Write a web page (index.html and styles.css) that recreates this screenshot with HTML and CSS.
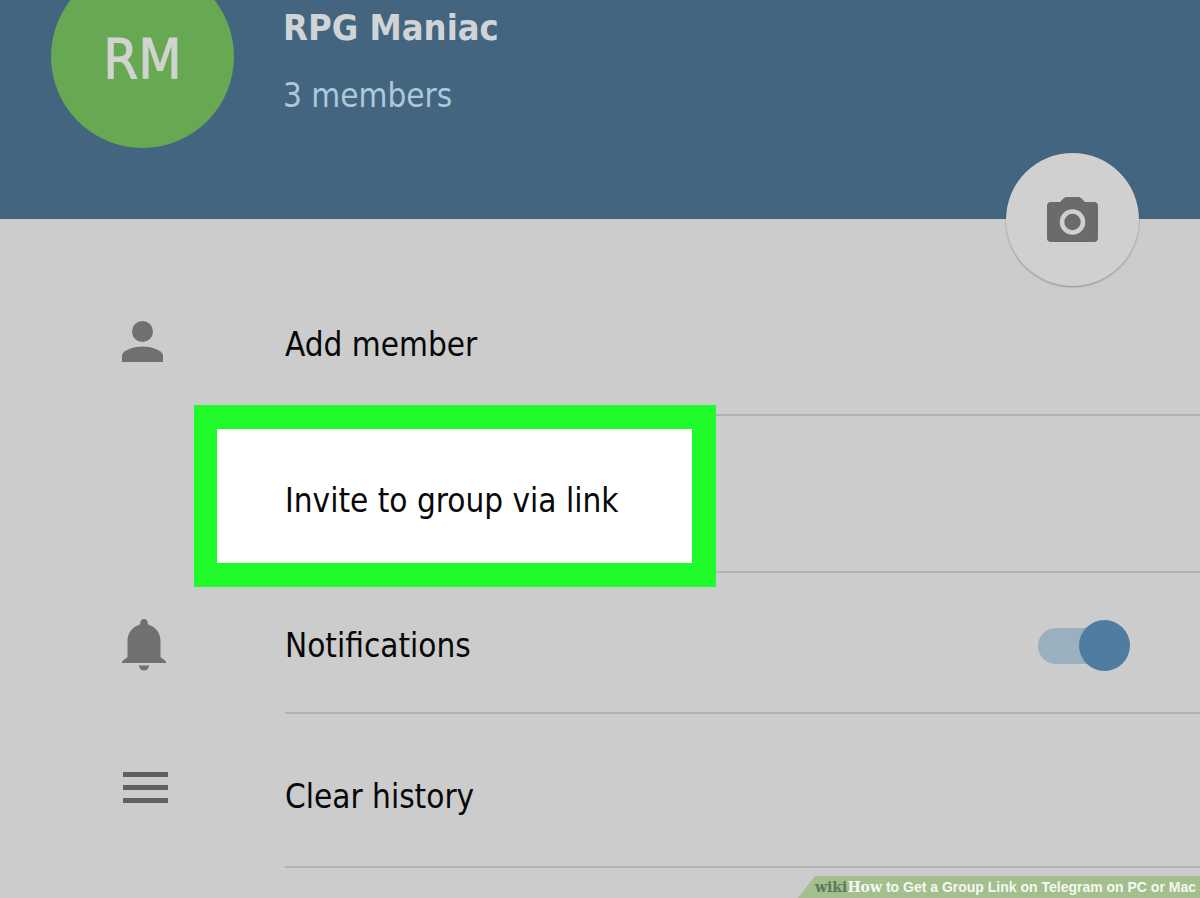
FILE: index.html
```html
<!DOCTYPE html>
<html lang="en">
<head>
<meta charset="utf-8">
<meta name="viewport" content="width=device-width, initial-scale=1">
<title>RPG Maniac</title>
<link rel="stylesheet" href="styles.css">
</head>
<body>
<div class="page">
  <header class="header">
    <div class="avatar">RM</div>
    <div class="info">
      <h1 class="title">RPG Maniac</h1>
      <p class="members">3 members</p>
    </div>
    <button class="camera" type="button" aria-label="Set group photo">
      <svg width="52" height="46" viewBox="0 0 52 46" aria-hidden="true">
        <path fill="#6b6b6b" d="M4 5H13L17 1Q18 0 20 0H31Q33 0 34 1L38 5H47Q51 5 51 9V41Q51 45 47 45H4Q0 45 0 41V9Q0 5 4 5Z"/>
        <circle cx="25.500" cy="25" r="10.500" fill="#6b6b6b" stroke="#d0d0d0" stroke-width="4.500"/>
      </svg>
    </button>
  </header>
  <main class="list">
    <div class="row row-add">
      <div class="icon">
        <svg width="42" height="42" viewBox="0 0 42 42" fill="#707070" aria-hidden="true">
          <circle cx="20.500" cy="10.500" r="10.500"/>
          <path d="M0 41V34C2 28.500 12 25.500 20.500 25.500S39 28.500 41 34V41Z"/>
        </svg>
      </div>
      <div class="body"><button class="action" type="button">Add member</button></div>
    </div>
    <div class="row row-invite">
      <div class="icon"></div>
      <div class="body"><span class="frame"></span><button class="action" type="button">Invite to group via link</button></div>
    </div>
    <div class="row row-notify">
      <div class="icon">
        <svg width="44" height="52" viewBox="0 0 44 52" fill="#707070" aria-hidden="true">
          <path d="M22 0C24.500 0 26 2 26 5.500C33.500 7.500 38.500 14 38.500 22V38L44 42.500V44H0V42.500L5.500 38V22C5.500 14 10.500 7.500 18 5.500C18 2 19.500 0 22 0Z"/>
          <path d="M16.500 46.500H27.500C26.500 49.500 24.500 51.500 22 51.500S17.500 49.500 16.500 46.500Z"/>
        </svg>
      </div>
      <div class="body">
        <label class="label" for="notify">Notifications</label>
        <input class="switch" id="notify" type="checkbox" role="switch" checked>
      </div>
    </div>
    <div class="row row-clear">
      <div class="icon">
        <svg width="46" height="32" viewBox="0 0 46 32" fill="#606060" aria-hidden="true">
          <path d="M1 0H46V5H1ZM1 13H46V18H1ZM1 26H46V31H1Z"/>
        </svg>
      </div>
      <div class="body"><button class="action" type="button">Clear history</button></div>
    </div>
  </main>
  <footer class="caption"><span class="wiki">wiki</span><span class="how">How</span> to Get a Group Link on Telegram on PC or Mac</footer>
</div>
</body>
</html>
```
FILE: styles.css
```css
* { box-sizing: border-box; }

body {
  margin: 0;
  background: #cccccc;
  color: #080808;
  font-family: "DejaVu Sans Condensed", "DejaVu Sans", sans-serif;
  font-size: 33px;
}

.page {
  min-height: 100vh;
  display: flex;
  flex-direction: column;
  overflow: hidden;
}

.header {
  position: relative;
  display: flex;
  align-items: flex-start;
  gap: 49px;
  padding: 0 60px 71px 51px;
  background: #436580;
}

.avatar {
  flex: none;
  width: 183px;
  height: 183px;
  margin-top: -35px;
  border-radius: 50%;
  background: #67a853;
  color: #d0d4d0;
  font-size: 56px;
  line-height: 187px;
  text-align: center;
  -webkit-text-stroke: 1px #d0d4d0;
}

.info { padding-top: 4px; }

.title {
  margin: 0;
  color: #d0d4d6;
  font-size: 36px;
  line-height: 48px;
}

.members {
  margin: 20px 0 0;
  color: #adc8db;
  line-height: 48px;
}

.camera {
  position: absolute;
  right: 61px;
  bottom: -67px;
  width: 133px;
  height: 133px;
  display: grid;
  place-items: center;
  padding: 0;
  border: 0;
  border-radius: 50%;
  background: #d0d0d0;
  box-shadow: 0 1px 2px rgba(0, 0, 0, 0.3);
}

.list { padding-top: 54px; }

.row {
  display: grid;
  grid-template-columns: 163px 1fr;
  padding-left: 122px;
}

.icon { display: flex; align-items: center; }
.icon svg { display: block; }

.body {
  position: relative;
  display: flex;
  align-items: center;
  justify-content: space-between;
  padding-right: 70px;
  border-bottom: 2px solid #b2b2b2;
}

.row-add { height: 143px; }
.row-add .icon { padding-bottom: 5px; }
.row-add .body { padding-top: 2px; }
.row-invite { height: 157px; }
.row-invite .body { padding-top: 14px; }
.row-notify { height: 141px; }
.row-notify .icon { padding-top: 3px; }
.row-notify .body { padding-top: 6px; }
.row-clear { height: 154px; }
.row-clear .icon { padding-bottom: 7px; }
.row-clear .body { padding-top: 13px; }

.action {
  position: relative;
  padding: 0;
  border: 0;
  background: none;
  color: inherit;
  font: inherit;
  line-height: 48px;
  text-align: left;
}

.label { line-height: 48px; }

.frame {
  position: absolute;
  top: -11px;
  left: -91px;
  width: 522px;
  height: 182px;
  border: 24px solid #1ffb2b;
  border-width: 24px 24px 24px 23px;
  background: #ffffff;
}

.switch {
  appearance: none;
  position: relative;
  width: 92px;
  height: 52px;
  margin: 0;
}

.switch::before {
  content: "";
  position: absolute;
  inset: 8px 14px 8px 0;
  border-radius: 18px;
  background: #9ab0bf;
}

.switch::after {
  content: "";
  position: absolute;
  top: 0;
  right: 0;
  width: 51px;
  height: 51px;
  border-radius: 50%;
  background: #507c9f;
}

.caption {
  align-self: flex-end;
  margin-top: auto;
  padding: 0 4px 0 17px;
  background: #a3bf8d;
  clip-path: polygon(17px 0, 100% 0, 100% 100%, 0 100%);
  color: #f4f8f0;
  font-family: "Liberation Sans", Arial, sans-serif;
  font-weight: bold;
  font-size: 14px;
  line-height: 22px;
}

.wiki, .how { font-family: "DejaVu Serif", serif; }

.wiki { color: #60775a; }
```
